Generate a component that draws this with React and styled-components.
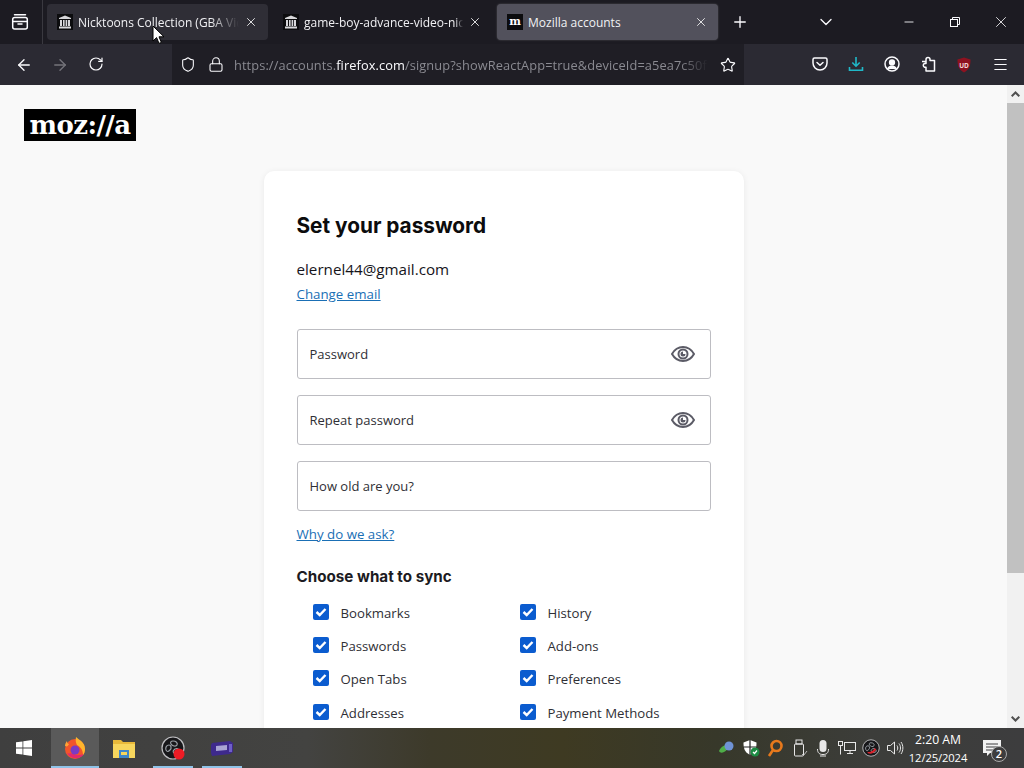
import React from 'react';
import styled, { createGlobalStyle } from 'styled-components';
import {
  ArrowLeft,
  ArrowRight,
  RotateCw,
  Lock,
  Shield,
  Star,
  Menu,
  X,
  Plus,
  ChevronDown,
  Minus,
} from 'lucide-react';

const GlobalStyle = createGlobalStyle`
  html, body {
    margin: 0;
    padding: 0;
    height: 100%;
    overflow: hidden;
  }
  * {
    box-sizing: border-box;
  }
`;

const Screen = styled.div`
  position: relative;
  width: 1024px;
  height: 768px;
  display: flex;
  flex-direction: column;
  overflow: hidden;
  font-family: 'Open Sans', 'Noto Sans', sans-serif;
`;

/* browser chrome */
const TabStrip = styled.div`
  height: 44px;
  flex: none;
  display: flex;
  align-items: center;
  background: #1c1b22;
  color: #fbfbfe;
`;

const TabsButton = styled.div`
  width: 43px;
  height: 44px;
  display: flex;
  align-items: center;
  justify-content: center;
  padding-right: 3px;
  border-right: 1px solid #3a3940;
  margin-right: 4px;
  flex: none;
`;

const Tab = styled.div`
  width: ${(p) => p.$width}px;
  height: 36px;
  margin-right: 5px;
  flex: none;
  display: flex;
  align-items: center;
  padding: 0 9px 0 10px;
  border-radius: 4px;
  background: ${(p) => (p.$active ? '#52515c' : p.$hover ? '#2f2e36' : 'transparent')};
  box-shadow: ${(p) => (p.$active ? '0 0 2px rgba(255,255,255,0.25)' : 'none')};
`;

const Favicon = styled.div`
  width: 16px;
  height: 16px;
  flex: none;
  display: flex;
  align-items: center;
  justify-content: center;
  overflow: hidden;
  background: #0c0c0e;
`;

const FaviconLetter = styled.span`
  font-family: 'DejaVu Serif', serif;
  font-weight: 700;
  font-size: 11px;
  line-height: 16px;
  color: #fff;
`;

const TabTitle = styled.span`
  flex: 1;
  min-width: 0;
  margin-left: 5px;
  font-size: 12px;
  white-space: nowrap;
  overflow: hidden;
  color: #f1f1f4;
  -webkit-mask-image: ${(p) => (p.$fade ? `linear-gradient(90deg, #000 ${p.$fade}%, transparent 100%)` : 'none')};
  mask-image: ${(p) => (p.$fade ? `linear-gradient(90deg, #000 ${p.$fade}%, transparent 100%)` : 'none')};
`;

const TabClose = styled.div`
  width: 16px;
  height: 16px;
  flex: none;
  margin-left: 4px;
  display: flex;
  align-items: center;
  justify-content: center;
`;

const NewTab = styled.div`
  width: 34px;
  display: flex;
  justify-content: center;
`;

const TabListButton = styled.div`
  width: 34px;
  margin-left: 52px;
  display: flex;
  justify-content: center;
`;

const WindowControls = styled.div`
  margin-left: auto;
  display: flex;
`;

const WindowButton = styled.div`
  width: 46px;
  height: 44px;
  display: flex;
  align-items: center;
  justify-content: center;
`;

const Toolbar = styled.div`
  height: 41px;
  flex: none;
  display: flex;
  align-items: center;
  background: #2b2a33;
  color: #fbfbfe;
`;

const NavButton = styled.div`
  width: 36px;
  display: flex;
  justify-content: center;
  opacity: ${(p) => (p.$disabled ? 0.35 : 1)};
`;

const NavGroup = styled.div`
  display: flex;
  padding-left: 6px;
  width: 172px;
  flex: none;
`;

const UrlBar = styled.div`
  width: 572px;
  height: 41px;
  flex: none;
  display: flex;
  align-items: center;
  background: #1f1e25;
  padding: 0 8px;
`;

const UrlIcon = styled.div`
  width: 16px;
  display: flex;
  justify-content: center;
  margin-left: ${(p) => p.$gap || 0}px;
`;

const UrlText = styled.div`
  flex: 1;
  min-width: 0;
  margin: 0 12px 0 10px;
  font-size: 12.8px;
  letter-spacing: 0.1px;
  white-space: nowrap;
  overflow: hidden;
  color: #8a8a91;
  -webkit-mask-image: linear-gradient(90deg, #000 94%, transparent 100%);
  mask-image: linear-gradient(90deg, #000 94%, transparent 100%);
`;

const UrlHost = styled.span`
  color: #fbfbfe;
`;

const ToolIcons = styled.div`
  display: flex;
  margin-left: 58px;
`;

const ToolIcon = styled.div`
  width: 36px;
  display: flex;
  justify-content: center;
`;

/* page */
const Viewport = styled.div`
  flex: 1;
  min-height: 0;
  display: flex;
  background: #f9f9f9;
`;

const Page = styled.main`
  flex: 1;
  min-width: 0;
  overflow: hidden;
  padding: 24px 0 0;
`;

const Logo = styled.div`
  width: 112px;
  height: 32px;
  margin-left: 24px;
  background: #000;
  color: #fff;
  font-family: 'DejaVu Serif', serif;
  font-weight: 700;
  font-size: 26px;
  line-height: 32px;
  letter-spacing: -0.6px;
  text-align: center;
`;

const Card = styled.section`
  width: 480px;
  margin: 30px auto 0;
  padding: 39px 33px 40px;
  background: #fff;
  border-radius: 10px;
  box-shadow: 0 1px 6px rgba(0, 0, 0, 0.07);
`;

const Heading = styled.h1`
  margin: 0;
  font-family: 'Inter', sans-serif;
  font-size: 20.8px;
  line-height: 32px;
  font-weight: 700;
  color: #0c0c0d;
`;

const Email = styled.div`
  margin-top: 16px;
  font-size: 15.2px;
  line-height: 22px;
  color: #15141a;
`;

const TextLink = styled.a`
  display: block;
  font-size: 13.3px;
  line-height: 20px;
  color: #1a6fb5;
  text-decoration: underline;
`;

const ChangeEmail = styled(TextLink)`
  margin-top: 4px;
`;

const Fields = styled.div`
  margin-top: 25px;
  display: flex;
  flex-direction: column;
  gap: 16px;
`;

const Field = styled.div`
  height: 50px;
  display: flex;
  align-items: center;
  justify-content: space-between;
  padding: 0 15px 0 12px;
  border: 1px solid #bdbdc2;
  border-radius: 3px;
  background: #fff;
  font-size: 13px;
  color: #2f2f35;
`;

const FieldIcon = styled.span`
  display: flex;
`;

const WhyLink = styled(TextLink)`
  margin-top: 13px;
`;

const SyncHeading = styled.h2`
  margin: 23px 0 0;
  font-family: 'Inter', sans-serif;
  font-size: 15.2px;
  line-height: 20px;
  font-weight: 700;
  color: #1c1b22;
`;

const SyncGrid = styled.div`
  margin-top: 16px;
  margin-left: 16px;
  display: grid;
  grid-template-columns: 207px 1fr;
  grid-auto-rows: 17px;
  row-gap: 16.4px;
`;

const SyncItem = styled.label`
  display: flex;
  align-items: center;
  gap: 12px;
  font-size: 13.2px;
  color: #2f2f35;
`;

const SyncLabel = styled.span`
  margin-top: 2px;
`;

const Check = styled.span`
  width: 16px;
  height: 16px;
  flex: none;
  display: flex;
  align-items: center;
  justify-content: center;
  border-radius: 2px;
  background: #0b5ccf;
`;

const Scrollbar = styled.div`
  width: 17px;
  flex: none;
  display: flex;
  flex-direction: column;
  background: #f1f1f1;
`;

const ScrollArrow = styled.div`
  height: 18px;
  flex: none;
  display: flex;
  align-items: center;
  justify-content: center;
`;

const ScrollThumb = styled.div`
  height: 470px;
  flex: none;
  background: #c1c1c1;
`;

const ScrollSpace = styled.div`
  flex: 1;
`;

/* windows taskbar */
const Taskbar = styled.footer`
  height: 40px;
  flex: none;
  display: flex;
  align-items: center;
  background: linear-gradient(90deg, #3f3f3f 0%, #434341 30%, #3d3a2a 42%, #3e3a22 55%, #37382a 70%, #3c3d3a 85%, #3d3d3e 100%);
  color: #fff;
`;

const StartButton = styled.div`
  width: 51px;
  height: 40px;
  flex: none;
  display: flex;
  align-items: center;
  justify-content: center;
  padding-right: 3px;
`;

const AppButton = styled.div`
  position: relative;
  width: 48px;
  height: 40px;
  margin-right: 1px;
  flex: none;
  display: flex;
  align-items: center;
  justify-content: center;
  background: ${(p) => (p.$active ? '#5a5a5a' : 'transparent')};

  &::after {
    content: '';
    display: ${(p) => (p.$open ? 'block' : 'none')};
    position: absolute;
    bottom: 0;
    left: ${(p) => (p.$active ? 0 : 4)}px;
    right: ${(p) => (p.$active ? 0 : 4)}px;
    height: 2px;
    background: #8fc3e8;
  }
`;

const Tray = styled.div`
  margin-left: auto;
  display: flex;
  align-items: center;
  height: 40px;
`;

const TrayIcon = styled.div`
  width: 24px;
  display: flex;
  justify-content: center;
`;

const Clock = styled.div`
  width: 62px;
  padding-top: 1px;
  text-align: center;
  line-height: 18px;
  color: #fff;
`;

const ClockTime = styled.div`
  font-size: 12.2px;
`;

const ClockDate = styled.div`
  font-size: 11.2px;
  letter-spacing: -0.1px;
`;

const Notify = styled.div`
  position: relative;
  width: 34px;
  margin: 0 15px 0 6px;
  display: flex;
  justify-content: center;
`;

const NotifyBadge = styled.span`
  position: absolute;
  right: 2px;
  bottom: -5px;
  width: 16px;
  height: 16px;
  border: 1px solid #aaa;
  border-radius: 50%;
  background: #3d3d3e;
  font-size: 11px;
  font-weight: 600;
  line-height: 14px;
  text-align: center;
`;

const Pointer = styled.svg`
  position: absolute;
  left: 152px;
  top: 25px;
`;

const ArchiveIcon = () => (
  <Favicon>
    <svg width="14" height="14" viewBox="0 0 14 14" fill="#d7d7da">
      <path d="M7 0.5 13 3v1H1V3z" />
      <rect x="2" y="5" width="2" height="6" />
      <rect x="5" y="5" width="1.6" height="6" />
      <rect x="7.6" y="5" width="1.6" height="6" />
      <rect x="10" y="5" width="2" height="6" />
      <rect x="1" y="11.5" width="12" height="2" />
    </svg>
  </Favicon>
);

const FirefoxViewIcon = () => (
  <svg width="18" height="18" viewBox="0 0 18 18" fill="none" stroke="#fbfbfe" strokeWidth="1.5">
    <path d="M3.5 1.7h11" strokeLinecap="round" />
    <rect x="1.7" y="4.5" width="14.6" height="11.5" rx="2" />
    <path d="M1.7 8.5h14.6" />
    <path d="M7 11h4" strokeLinecap="round" />
  </svg>
);

const RestoreIcon = () => (
  <svg width="12" height="12" viewBox="0 0 12 12" fill="none" stroke="#fbfbfe" strokeWidth="1">
    <rect x="1.5" y="3.5" width="7" height="7" />
    <path d="M3.5 3.5v-2h7v7h-2" />
  </svg>
);

const PocketIcon = () => (
  <svg width="16" height="16" viewBox="0 0 16 16" fill="none" stroke="#fbfbfe" strokeWidth="1.5" strokeLinejoin="round">
    <path d="M2.5 2h11A1.5 1.5 0 0 1 15 3.5V7A7 7 0 0 1 1 7V3.5A1.5 1.5 0 0 1 2.5 2z" />
    <path d="M5 6.5 8 9.3l3-2.8" strokeLinecap="round" />
  </svg>
);

const DownloadIcon = () => (
  <svg width="16" height="16" viewBox="0 0 16 16" fill="none" stroke="#20b8c8" strokeWidth="1.6">
    <path d="M8 1v9M4.3 6.5 8 10.2l3.7-3.7" />
    <path d="M1.5 11v3.2h13V11" />
  </svg>
);

const AccountIcon = () => (
  <svg width="16" height="16" viewBox="0 0 16 16" fill="none" stroke="#fbfbfe" strokeWidth="1.5">
    <circle cx="8" cy="8" r="7" />
    <circle cx="8" cy="6.4" r="2.4" fill="#fbfbfe" />
    <path d="M3.6 13c1-2 2.6-2.8 4.4-2.8s3.4.8 4.4 2.8" fill="#fbfbfe" />
  </svg>
);

const ExtensionIcon = () => (
  <svg width="16" height="16" viewBox="0 0 16 16" fill="none" stroke="#fbfbfe" strokeWidth="1.5" strokeLinejoin="round">
    <path d="M6 5.500V3.500a2 2 0 0 1 4 0v-.2V4.500h4.500V15H6v-3.800H4.500a2 2 0 0 1 0-3.700H6V5.500H2" />
  </svg>
);

const UBlockIcon = () => (
  <svg width="18" height="18" viewBox="0 0 18 18">
    <path d="M9 1.5 15.500 3.500c0 6-1 10-6.500 13C3.500 13.500 2.500 9.500 2.500 3.500z" fill="#8e1220" />
    <text x="9" y="11.500" textAnchor="middle" fontSize="6.500" fontWeight="700" fill="#f3d8da" fontFamily="Open Sans, sans-serif">
      UD
    </text>
  </svg>
);

const EyeIcon = () => (
  <svg width="24" height="24" viewBox="0 0 24 24" fill="none" stroke="#5b5b66" strokeWidth="2">
    <path d="M1 12c2.600-4.600 6.500-7 11-7s8.400 2.400 11 7c-2.600 4.600-6.500 7-11 7S3.600 16.600 1 12z" />
    <circle cx="12" cy="12" r="4.500" />
    <path d="M12 9.500a2.500 2.500 0 1 0 2.500 2.500H12z" fill="#5b5b66" stroke="none" />
  </svg>
);

const CheckMark = () => (
  <svg width="12" height="12" viewBox="0 0 12 12" fill="none" stroke="#fff" strokeWidth="2.400">
    <path d="M1.500 6 4.700 9 10.500 3" />
  </svg>
);

const ScrollChevron = ({ up }) => (
  <svg width="9" height="6" viewBox="0 0 9 6" fill="none" stroke="#505050" strokeWidth="2">
    <path d={up ? 'M0.700 5.300 4.500 1.500l3.800 3.800' : 'M0.700 0.700 4.500 4.500l3.800-3.800'} />
  </svg>
);

const WindowsLogo = () => (
  <svg width="16" height="16" viewBox="0 0 16 16" fill="#fff">
    <path d="M0 2.300 6.500 1.400v6.200H0zM7.300 1.300 16 0v7.600H7.300zM0 8.400h6.500v6.200L0 13.700zM7.300 8.400H16V16l-8.700-1.300z" />
  </svg>
);

const FirefoxLogo = () => (
  <svg width="24" height="24" viewBox="0 0 24 24">
    <circle cx="12" cy="13" r="10" fill="#f2552b" />
    <path d="M4 17A10 10 0 0 0 21 18c-3 1-7 2-10 0-3-1-5-1-7 0z" fill="#e3296e" />
    <path d="M13 1c3 3 9 5 9 12 0 3-1 5-2 6 0-6-3-8-6-10-1.500-2.500-1.500-5-1-8z" fill="#ffb52c" />
    <path d="M2 10c0-2 1-4 2-5 0 2 1 3 2 3-1 2-2 3-4 2z" fill="#ffa436" />
    <circle cx="12" cy="14" r="4.500" fill="#7a3bc4" />
  </svg>
);

const FolderLogo = () => (
  <svg width="24" height="24" viewBox="0 0 24 24">
    <path d="M1 4h8l2 2h12v4H1z" fill="#e8b93a" />
    <rect x="1" y="8" width="22" height="14" fill="#f7d65d" />
    <rect x="7" y="14" width="10" height="8" fill="#3f86c9" />
    <rect x="9" y="16" width="6" height="3" fill="#f7d65d" />
  </svg>
);

const ObsLogo = ({ size = 24, dot = true }) => (
  <svg width={size} height={size} viewBox="0 0 24 24">
    <circle cx="12" cy="12" r="11" fill="#17171a" stroke="#bfbfc2" strokeWidth="1.200" />
    <path d="M12 5c3 0 5 2 4 4s-5 1-6-1 0-3 2-3zM5 14c-1-3 1-5 3-5s3 3 1 5-3 2-4 0zM14 13c3-1 5 1 5 3s-4 3-6 1 0-3 1-4z" fill="none" stroke="#9aa0a6" strokeWidth="1.200" />
    {dot ? (
      <circle cx="18" cy="18" r="5.500" fill="#ee1c25" />
    ) : (
      <path d="M7 17c4 1 8-1 10-5l2 2c-2 4-7 7-11 5z" fill="#d9232c" />
    )}
  </svg>
);

const GameLogo = () => (
  <svg width="24" height="24" viewBox="0 0 24 24">
    <path d="M2 7 20 5l3 2v9l-3 2-18 2-1-3V9z" fill="#3e2a8c" />
    <path d="M6 10l11-1v5l-11 1z" fill="#a9a4d4" />
    <rect x="19" y="8" width="3" height="8" fill="#6f5fc8" />
  </svg>
);

const GlobeTray = () => (
  <svg width="18" height="18" viewBox="0 0 18 18">
    <path d="M1 12c2-4 5-7 13-6-3 2-4 5-8 7-2 1-4 1-5-1z" fill="#4fae48" />
    <circle cx="11" cy="7" r="4.500" fill="#6f93d6" />
  </svg>
);

const DefenderTray = () => (
  <svg width="18" height="18" viewBox="0 0 18 18">
    <path d="M8 1 14.500 3.500c0 6-1 9.500-6.500 12.500C2.500 13 1.500 9.500 1.500 3.500z" fill="#fff" />
    <path d="M8 1v15M1.500 8h13" stroke="#222" strokeWidth="1.200" />
    <circle cx="13" cy="13" r="4.500" fill="#1c8b43" />
    <path d="M11 13l1.500 1.500 2.500-3" fill="none" stroke="#fff" strokeWidth="1.200" />
  </svg>
);

const SearchTray = () => (
  <svg width="18" height="18" viewBox="0 0 18 18" fill="none" stroke="#e7791c" strokeWidth="2.600">
    <circle cx="10.500" cy="7" r="5" />
    <path d="M7 11 3 17" />
  </svg>
);

const UsbTray = () => (
  <svg width="18" height="18" viewBox="0 0 18 18" fill="none" stroke="#e8e8e8" strokeWidth="1">
    <rect x="6" y="1" width="6" height="4" />
    <rect x="4.500" y="5" width="9" height="12" rx="1" />
    <path d="M12 15l1.500 1.500L17 12" stroke="#bbb" />
  </svg>
);

const MicTray = () => (
  <svg width="18" height="18" viewBox="0 0 18 18">
    <rect x="5.500" y="1" width="7" height="12" rx="3.500" fill="#e8e8e8" />
    <path d="M3.500 10c0 4 2 5.500 5.500 5.500s5.500-1.500 5.500-5.500M6 17h6" fill="none" stroke="#e8e8e8" />
  </svg>
);

const NetworkTray = () => (
  <svg width="18" height="18" viewBox="0 0 18 18" fill="none" stroke="#e8e8e8" strokeWidth="1">
    <rect x="6.500" y="3.500" width="11" height="8" />
    <rect x="0.500" y="2.500" width="4" height="4" />
    <path d="M2.500 6.500v9M12 11.500v3M9 14.500h6" />
  </svg>
);

const SpeakerTray = () => (
  <svg width="18" height="18" viewBox="0 0 18 18" fill="none" stroke="#e8e8e8" strokeWidth="1">
    <path d="M1.500 6.500h3L8.500 3v12l-4-3.500h-3z" />
    <path d="M11 6.500c1 1.500 1 3.500 0 5M13 4.500c2 2.500 2 6.500 0 9M15 3c2.500 3.500 2.500 8.500 0 12" />
  </svg>
);

const MessageTray = () => (
  <svg width="20" height="18" viewBox="0 0 20 18">
    <path d="M1 1h18v13H8l-3 3v-3H1z" fill="#f2f2f2" />
    <path d="M4 5h12M4 8h12M4 11h8" stroke="#3d3d3e" strokeWidth="1.200" />
  </svg>
);

const syncOptions = [
  ['Bookmarks', 'History'],
  ['Passwords', 'Add-ons'],
  ['Open Tabs', 'Preferences'],
  ['Addresses', 'Payment Methods'],
].flat();

const tabs = [
  { title: 'Nicktoons Collection (GBA Video)', width: 221, hover: true, fade: 82 },
  { title: 'game-boy-advance-video-nicktoons', width: 219, fade: 95 },
  { title: 'Mozilla accounts', width: 221, active: true, letter: true },
];

const PasswordField = ({ label }) => (
  <Field>
    {label}
    <FieldIcon>
      <EyeIcon />
    </FieldIcon>
  </Field>
);

const App = () => {
  return (
    <Screen>
      <GlobalStyle />
      <TabStrip>
        <TabsButton>
          <FirefoxViewIcon />
        </TabsButton>
        {tabs.map((tab) => (
          <Tab key={tab.title} $width={tab.width} $active={tab.active} $hover={tab.hover}>
            {tab.letter ? (
              <Favicon>
                <FaviconLetter>m</FaviconLetter>
              </Favicon>
            ) : (
              <ArchiveIcon />
            )}
            <TabTitle $fade={tab.fade}>{tab.title}</TabTitle>
            <TabClose>
              <X size={14} color="#e8e8ea" strokeWidth={1.6} />
            </TabClose>
          </Tab>
        ))}
        <NewTab>
          <Plus size={18} color="#fbfbfe" strokeWidth={1.8} />
        </NewTab>
        <TabListButton>
          <ChevronDown size={20} color="#fbfbfe" strokeWidth={1.6} />
        </TabListButton>
        <WindowControls>
          <WindowButton>
            <Minus size={14} color="#fbfbfe" strokeWidth={1.5} />
          </WindowButton>
          <WindowButton>
            <RestoreIcon />
          </WindowButton>
          <WindowButton>
            <X size={18} color="#fbfbfe" strokeWidth={1.1} />
          </WindowButton>
        </WindowControls>
      </TabStrip>

      <Toolbar>
        <NavGroup>
          <NavButton>
            <ArrowLeft size={18} strokeWidth={1.8} />
          </NavButton>
          <NavButton $disabled>
            <ArrowRight size={18} strokeWidth={1.8} />
          </NavButton>
          <NavButton>
            <RotateCw size={16} strokeWidth={1.8} />
          </NavButton>
        </NavGroup>
        <UrlBar>
          <UrlIcon>
            <Shield size={17} strokeWidth={1.6} />
          </UrlIcon>
          <UrlIcon $gap={12}>
            <Lock size={17} strokeWidth={1.6} />
          </UrlIcon>
          <UrlText>
            https://accounts.<UrlHost>firefox.com</UrlHost>/signup?showReactApp=true&amp;deviceId=a5ea7c50f1
          </UrlText>
          <UrlIcon>
            <Star size={16} strokeWidth={1.7} />
          </UrlIcon>
        </UrlBar>
        <ToolIcons>
          <ToolIcon>
            <PocketIcon />
          </ToolIcon>
          <ToolIcon>
            <DownloadIcon />
          </ToolIcon>
          <ToolIcon>
            <AccountIcon />
          </ToolIcon>
          <ToolIcon>
            <ExtensionIcon />
          </ToolIcon>
          <ToolIcon>
            <UBlockIcon />
          </ToolIcon>
          <ToolIcon>
            <Menu size={17} strokeWidth={1.6} />
          </ToolIcon>
        </ToolIcons>
      </Toolbar>

      <Viewport>
        <Page>
          <Logo>moz://a</Logo>
          <Card>
            <Heading>Set your password</Heading>
            <Email>elernel44@gmail.com</Email>
            <ChangeEmail href="#">Change email</ChangeEmail>
            <Fields>
              <PasswordField label="Password" />
              <PasswordField label="Repeat password" />
              <Field>How old are you?</Field>
            </Fields>
            <WhyLink href="#">Why do we ask?</WhyLink>
            <SyncHeading>Choose what to sync</SyncHeading>
            <SyncGrid>
              {syncOptions.map((name) => (
                <SyncItem key={name}>
                  <Check>
                    <CheckMark />
                  </Check>
                  <SyncLabel>{name}</SyncLabel>
                </SyncItem>
              ))}
            </SyncGrid>
          </Card>
        </Page>
        <Scrollbar>
          <ScrollArrow>
            <ScrollChevron up />
          </ScrollArrow>
          <ScrollThumb />
          <ScrollSpace />
          <ScrollArrow>
            <ScrollChevron />
          </ScrollArrow>
        </Scrollbar>
      </Viewport>

      <Taskbar>
        <StartButton>
          <WindowsLogo />
        </StartButton>
        <AppButton $active $open>
          <FirefoxLogo />
        </AppButton>
        <AppButton>
          <FolderLogo />
        </AppButton>
        <AppButton $open>
          <ObsLogo />
        </AppButton>
        <AppButton $open>
          <GameLogo />
        </AppButton>
        <Tray>
          <TrayIcon>
            <GlobeTray />
          </TrayIcon>
          <TrayIcon>
            <DefenderTray />
          </TrayIcon>
          <TrayIcon>
            <SearchTray />
          </TrayIcon>
          <TrayIcon>
            <UsbTray />
          </TrayIcon>
          <TrayIcon>
            <MicTray />
          </TrayIcon>
          <TrayIcon>
            <NetworkTray />
          </TrayIcon>
          <TrayIcon>
            <ObsLogo size={18} dot={false} />
          </TrayIcon>
          <TrayIcon>
            <SpeakerTray />
          </TrayIcon>
          <Clock>
            <ClockTime>2:20 AM</ClockTime>
            <ClockDate>12/25/2024</ClockDate>
          </Clock>
          <Notify>
            <MessageTray />
            <NotifyBadge>2</NotifyBadge>
          </Notify>
        </Tray>
      </Taskbar>

      <Pointer width="13" height="20" viewBox="0 0 13 20">
        <path d="M1 1v15l3.600-3.400 2.400 5.800 2.400-1-2.400-5.600h5z" fill="#fff" stroke="#000" strokeWidth="1" />
      </Pointer>
    </Screen>
  );
};

export default App;
